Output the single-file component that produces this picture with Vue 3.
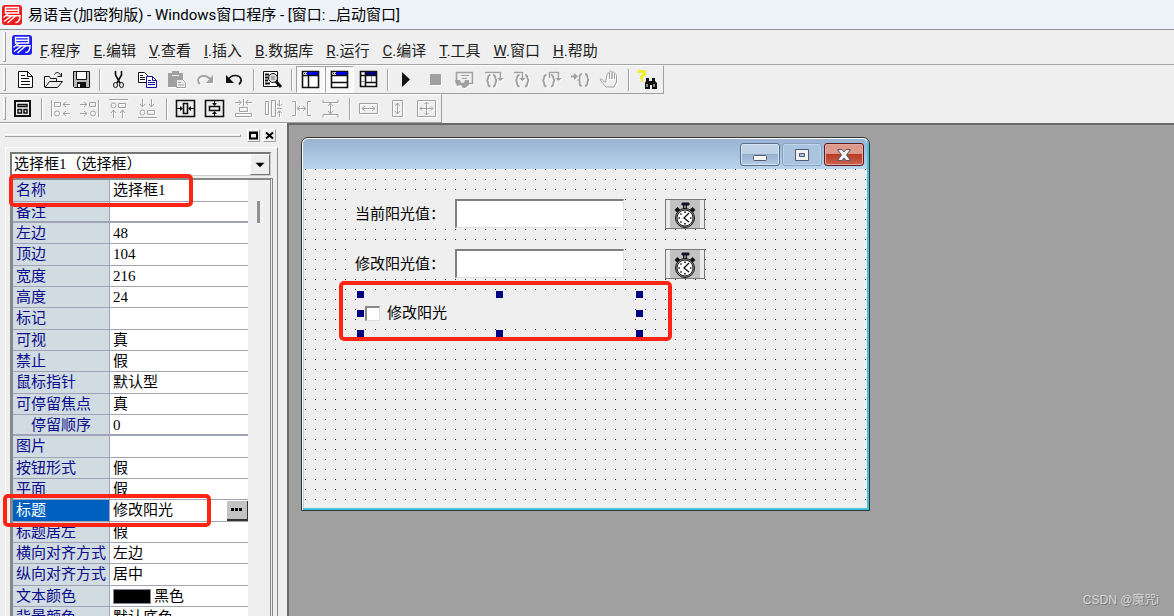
<script setup>
import { ref } from 'vue'

const menus = [
  ['F', '程序'], ['E', '编辑'], ['V', '查看'], ['I', '插入'], ['B', '数据库'],
  ['R', '运行'], ['C', '编译'], ['T', '工具'], ['W', '窗口'], ['H', '帮助'],
]

const logoPath = 'M3.500 2.500h13v5.500h-13zM3.500 5.300h13M7 8l-5.500 4.500M4.500 10.700h13.500c0 4.500-1 6.800-4.500 6.800M9.500 11l-7.500 5.500M13.500 11l-8 7'

const icons = {
  create: '<path d="M2.5 1.5h9l5 5v11h-14z" fill="#fff"/><path d="M11.5 1.5v5h5M5 5.5h4M5 8.5h8M5 11.5h9M5 14.5h9"/>',
  open: '<path d="M.5 17V6.5h5l1 2h6v3M1 17.5l4.500-6h13l-5 6z"/><path d="M10.500 4.500c1.500-3 5-2.500 6 1M17.500 3v3.500h-4"/>',
  save: '<path d="M1.500 1.500h16v16h-15l-1-1z" fill="#bbb"/><path d="M4.500 1.500h10v8h-10z" fill="#fff"/><path class="f" d="M5 12h9v6H5z"/><path d="M7 14v3" stroke="#fff" stroke-width="2"/>',
  cut: '<path d="M6.500 1v4l4.500 8M12.500 1v4L8 13" stroke-width="1.600"/><ellipse cx="6.500" cy="15" rx="2" ry="2.600"/><ellipse cx="12.500" cy="15" rx="2" ry="2.600"/>',
  copy: '<path d="M.5 2.500h6l3 3v7h-9z" fill="#fff"/><path d="M2 5.500h3M2 7.500h5M2 9.500h5"/><g stroke="#1010a0"><path d="M8.500 6.500h6l4 4v7h-10z" fill="#fff"/><path d="M14.500 6.500v4h4M10 10.500h3M10 12.500h7M10 14.500h7"/></g>',
  paste: '<path class="f" d="M1 3h4V1h7v2h4v14H1z"/><path d="M5 5.500h7" stroke="#eee"/><path d="M9.500 9.500h6l3 3v5h-9z" fill="#eee"/><path d="M11 12.500h3M11 15h6"/>',
  redo: '<path d="M4 14c-4-4-1-8 4-8 3 0 5 1.500 7 4" stroke-width="1.800"/><path class="f" d="M17 5v8H10z"/>',
  undo: '<path d="M3 10c2-3.500 4-5 8-4.500 5 .5 7 5 3 9" stroke-width="1.600"/><path class="f" d="M1 5v8h8z"/>',
  preview: '<path d="M.5 1.500h14v15H.5z" fill="#fff"/><path d="M2 4.500h4M2 7.500h3M2 10.500h3M2 13.500h5" stroke-width="2"/><circle cx="10" cy="8" r="4.500" fill="#ddd"/><path d="M8 7h4M8 9h4" stroke="#777"/><path d="M13 11.500l5 5.500" stroke-width="3"/>',
  winSide: '<path d="M1.500 1.500h16v16h-16z" fill="#fff" stroke-width="1.600"/><path d="M6 2h11v3H6z" fill="#0000e8" stroke="none"/><path d="M1.500 5.500h16M7.500 6v11" stroke-width="1.500"/><path d="M3 3.500h1M5 3.500h1"/>',
  winBottom: '<path d="M1.500 1.500h16v16h-16z" fill="#fff" stroke-width="1.600"/><path d="M6 2h11v3H6z" fill="#0000e8" stroke="none"/><path d="M1.500 5.500h16M2 12.500h15" stroke-width="1.500"/><path d="M3 3.500h1M5 3.500h1"/>',
  winBoth: '<path d="M1.500 1.500h16v15h-16z" fill="#fff" stroke-width="1.600"/><path d="M6 2h11v3H6z" fill="#000080" stroke="none"/><path d="M1.500 5.500h16M6.500 2v14M7 12.500h10" stroke-width="1.600"/><path d="M2 11.500h4M12.500 6v6" stroke="#888"/>',
  run: '<path class="f" d="M5 2l8 7.500L5 17z"/>',
  stop: '<path class="f" d="M4 4h11v11H4z"/>',
  inspect: '<path d="M1.500 2.500h16v11h-16z" fill="#eee" stroke-width="1.600"/><path d="M6 5.500h8M7 8.500h5"/><path class="f" d="M0 10h5l1 3h3l1-3h4v5l-4 3H8l-2-3-4 1z"/>',
  stepInto: '<path d="M1 2.500h15.500v6" stroke-width="1.500"/><path class="f" d="M13 8h7l-3.500 3z"/><path d="M6.500 5c-4 0-1 5-4 5.500 3 .5 0 6 4 6M9 5c4 0 1 5 4 5.500-3 .5 0 6-4 6" stroke-width="1.800"/>',
  stepOver: '<path d="M1 2.500h8.500v6" stroke-width="1.500"/><path class="f" d="M6 8h7l-3.500 3z"/><path d="M6.500 5c-4 0-1 5-4 5.500 3 .5 0 6 4 6M12 5c4 0 1 5 4 5.500-3 .5 0 6-4 6" stroke-width="1.800"/>',
  stepOut: '<path d="M7.500 8V2.500h9v6" stroke-width="1.500"/><path class="f" d="M13 8h7l-3.500 3z"/><path d="M4.500 5c-4 0-1 5-4 5.500 3 .5 0 6 4 6M9 5c4 0 1 5 4 5.500-3 .5 0 6-4 6" stroke-width="1.800"/>',
  runTo: '<path d="M0 6.500h5" stroke-width="2"/><path class="f" d="M3 3l4 3.500L3 10z"/><path d="M11 4c-4 0-1 5-3 6 2 .5-1 6 3 6M14 4c4 0 1 5 4 6-3 .5 0 6-4 6" stroke-width="1.800"/>',
  hand: '<path d="M5.500 12.500L2 9.500c-2-1.500-2 .5-1 1.500l5 6h8l2.500-5V5.500c0-2-2-2-2 0V9 3.500c0-2-2.500-2-2.500 0V9 2.500c0-2-2.500-2-2.500 0V9 4.500c0-2-2.500-2-2.500 0z"/>',
  find: '<path d="M1 3V1.500h5.500v3l-3 2V9M3 10.500h2" stroke="#f4ec00" stroke-width="2.400"/><path class="f" d="M8 8h3v3h3V8h3v3l2 2v6h-5v-4h-2v4H7v-6l1-2z"/><path d="M9 14v3M16 14v3" stroke="#fff"/>',
  layout: '<path d="M2 2h15v15H2z" stroke-width="2"/><path d="M5 5.500h9v2H5zM5 10.500h3.500V14H5zM11 10.500h3V14h-3z" stroke-width="1.500"/>',
  alignLeft: '<path d="M.5 1v17M3.500 3.500h6v4h-6zM12 5.500h7M15 3l-3 2.500L15 8M12 14.500h7M15 12l-3 2.500 3 2.500"/><circle cx="6" cy="14.500" r="2.500"/>',
  alignRight: '<path d="M18.500 1v17M9.500 3.500h6v4h-6zM0 5.500h7M4 3l3 2.500L4 8M0 14.500h7M4 12l3 2.500L4 17"/><circle cx="13" cy="14.500" r="2.500"/>',
  alignTop: '<path d="M0 .5h19M9.500 4.500h7v4h-7zM4.500 11v8M2 14l2.500-3L7 14M13.500 11v8M11 14l2.500-3 2.500 3"/><circle cx="4.500" cy="6.500" r="2.500"/>',
  alignBottom: '<path d="M0 18.500h19M9.500 11.500h7v4h-7zM4.500 0v8M2 5l2.500 3L7 5M13.500 0v8M11 5l2.500 3L16 5"/><circle cx="4.500" cy="13.500" r="2.500"/>',
  centerH: '<path d="M.5 1.500h18v16H.5zM7.500 4.500h4v10h-4z" stroke-width="1.600"/><path d="M1 9.500h5M18 9.500h-5"/><path class="f" d="M4 7l3 2.500L4 12zM15 7l-3 2.500 3 2.500z"/>',
  centerV: '<path d="M.5 1.500h18v16H.5zM4.500 7.500h10v4h-10z" stroke-width="1.600"/><path d="M9.500 1v5M9.500 18v-5"/><path class="f" d="M7 4h5L9.500 7zM7 15h5l-2.500-3z"/>',
  middleV: '<path d="M9.500 0v7M1 3.500h6M18 3.500h-6M5 1l2 2.500L5 6M14 1l-2 2.500L14 6M5.500 8.500h8v4h-8zM1.500 14.500h16v3h-16z"/>',
  middleH: '<path d="M2.500 2.500h3v13h-3zM8.500 1.500h4v16h-4zM14 9.500h5M16.500 1v6M14 5l2.500 2L19 5M16.500 18v-6M14 14l2.500-2 2.500 2"/>',
  spaceH: '<path d="M0 2.500h3.500v14H0M19 2.500h-3.500v14H19M5 9.500h9M8 7L5 9.500 8 12M11 7l3 2.500-3 2.500"/>',
  spaceV: '<path d="M2 .5v3h15v-3M2 18.500v-3h15v3M9.500 4v11M7 7l2.500-3L12 7M7 12l2.500 3 2.500-3"/>',
  sameW: '<path d="M.5 4.500h18v10H.5zM3 9.500h13M6 7L3 9.500 6 12M13 7l3 2.500-3 2.500"/>',
  sameH: '<path d="M4.500 1.500h10v16h-10zM9.500 4v11M7 7l2.500-3L12 7M7 12l2.500 3 2.500-3"/>',
  sameBoth: '<path d="M.5 1.500h18v16H.5zM9.500 3v13M3 9.500h13M7.500 5l2-2 2 2M7.500 14l2 2 2-2M5 7.500l-2 2 2 2M14 7.500l2 2-2 2"/>',
}

const mainBar = [
  [['create', '新建'], ['open', '打开'], ['save', '保存']],
  [['cut', '剪切'], ['copy', '复制'], ['paste', '粘贴', 1], ['redo', '重做', 1], ['undo', '撤销']],
  [['preview', '查找']],
  [['winSide', '工作夹', 0, 1], ['winBottom', '状态夹', 0, 1], ['winBoth', '全部']],
  [['run', '运行'], ['stop', '停止', 1], ['inspect', '查看', 1], ['stepInto', '跟踪进入', 1], ['stepOver', '单步', 1], ['stepOut', '跟踪返回', 1], ['runTo', '运行到光标', 1], ['hand', '断点', 1]],
  [['find', '帮助']],
]
const alignBar = [
  [['layout', '窗口布局']],
  [['alignLeft', '左对齐', 1], ['alignRight', '右对齐', 1], ['alignTop', '顶对齐', 1], ['alignBottom', '底对齐', 1]],
  [['centerH', '水平居中'], ['centerV', '垂直居中'], ['middleV', '中心对齐', 1], ['middleH', '中线对齐', 1], ['spaceH', '水平等距', 1], ['spaceV', '垂直等距', 1]],
  [['sameW', '同宽', 1], ['sameH', '同高', 1], ['sameBoth', '同大小', 1]],
]
const bars = [{ name: 'standard', groups: mainBar }, { name: 'align', groups: alignBar }]

const properties = [
  { name: '名称', value: '选择框1' },
  { name: '备注', value: '', end: true },
  { name: '左边', value: '48' },
  { name: '顶边', value: '104' },
  { name: '宽度', value: '216' },
  { name: '高度', value: '24' },
  { name: '标记', value: '' },
  { name: '可视', value: '真' },
  { name: '禁止', value: '假' },
  { name: '鼠标指针', value: '默认型' },
  { name: '可停留焦点', value: '真' },
  { name: '停留顺序', value: '0', sub: true, end: true },
  { name: '图片', value: '' },
  { name: '按钮形式', value: '假' },
  { name: '平面', value: '假' },
  { name: '标题', value: '修改阳光', selected: true },
  { name: '标题居左', value: '假' },
  { name: '横向对齐方式', value: '左边' },
  { name: '纵向对齐方式', value: '居中' },
  { name: '文本颜色', value: '黑色', swatch: true },
  { name: '背景颜色', value: '默认底色' },
]

const current = ref('')
const target = ref('')
const checked = ref(false)
const handles = ['nw', 'n', 'ne', 'w', 'e', 'sw', 's', 'se']
</script>

<template>
  <div class="app">
    <header class="titlebar">
      <svg class="logo" viewBox="0 0 20 20" aria-hidden="true">
        <rect width="20" height="20" rx="3" fill="#f01c1c" />
        <path :d="logoPath" />
      </svg>
      <span>易语言(加密狗版) - Windows窗口程序 - [窗口: _启动窗口]</span>
    </header>

    <nav class="menubar">
      <i class="grip"></i>
      <svg class="logo" viewBox="0 0 20 20" aria-hidden="true">
        <rect width="20" height="20" rx="3" fill="#1c1cf0" />
        <path :d="logoPath" />
      </svg>
      <button v-for="m in menus" :key="m[0]" type="button"><u>{{ m[0] }}</u>.{{ m[1] }}</button>
    </nav>

    <div v-for="bar in bars" :key="bar.name" class="toolrow">
      <div class="toolbar" :class="bar.name">
        <i class="grip"></i>
        <div v-for="(group, g) in bar.groups" :key="g" class="group">
          <button
            v-for="b in group"
            :key="b[0]"
            type="button"
            :aria-label="b[1]"
            :disabled="!!b[2]"
            :class="{ pressed: b[3] }"
          >
            <svg viewBox="0 0 19 19" v-html="icons[b[0]]"></svg>
          </button>
        </div>
      </div>
    </div>

    <main class="main">
      <aside class="panel">
        <div class="caption">
          <i></i>
          <button type="button" aria-label="最大化"><svg viewBox="0 0 9 9"><path d="M1 1.500h7v6H1zM1 2h7" /></svg></button>
          <button type="button" aria-label="关闭"><svg viewBox="0 0 9 9"><path d="M1 1.500l7 6M8 1.500l-7 6" /></svg></button>
        </div>
        <div class="sheet">
          <div class="combo">
            <select aria-label="组件"><option>选择框1（选择框）</option></select>
            <svg viewBox="0 0 20 20" aria-hidden="true"><path d="M5 8h10l-5 5z" /></svg>
          </div>
          <div class="grid">
            <table>
              <tbody>
                <tr v-for="p in properties" :key="p.name" :class="{ end: p.end, selected: p.selected }">
                  <th scope="row" :class="{ sub: p.sub }">{{ p.name }}</th>
                  <td>
                    <div class="cell">
                      <i v-if="p.swatch" class="swatch"></i>
                      <span>{{ p.value }}</span>
                      <button v-if="p.selected" type="button" aria-label="编辑标题">
                        <svg viewBox="0 0 12 3"><path d="M0 0h3v3H0zM4 0h3v3H4zM8 0h3v3H8z" /></svg>
                      </button>
                    </div>
                  </td>
                </tr>
              </tbody>
            </table>
            <div class="scroll"><i></i></div>
          </div>
        </div>
        <i class="mark mark-name"></i>
        <i class="mark mark-title"></i>
      </aside>

      <section class="workspace">
        <div class="form">
          <div class="form-title">
            <button type="button" aria-label="最小化">
              <svg viewBox="0 0 18 14"><rect x="2.500" y="7.500" width="13" height="5" rx="1" /></svg>
            </button>
            <button type="button" class="dim" aria-label="最大化">
              <svg viewBox="0 0 18 14"><path fill-rule="evenodd" d="M2.500 1.500h13v11h-13zM6.500 5.500h5v3h-5z" /></svg>
            </button>
            <button type="button" class="close" aria-label="关闭">
              <svg viewBox="0 0 18 14"><path d="M2.500 1.500h4.500l2 2.500 2-2.500h4.500L11.500 7l4 5.500H11L9 10l-2 2.500H2.500l4-5.500z" /></svg>
            </button>
          </div>
          <div class="canvas">
            <label class="lbl first" for="sun-now">当前阳光值：</label>
            <input id="sun-now" v-model="current" class="edit first" type="text" />
            <label class="lbl second" for="sun-new">修改阳光值：</label>
            <input id="sun-new" v-model="target" class="edit second" type="text" />
            <div v-for="t in ['first', 'second']" :key="t" class="timer" :class="t">
              <svg viewBox="0 0 30 28" aria-hidden="true">
                <path d="M12 3h7v2h-7z" fill="#15156e" stroke="#111" />
                <path d="M13.500 5h3v4h-3z" fill="#889" stroke="#111" />
                <path d="M6 8.500l3 3M24 8.500l-3 3" stroke="#111" stroke-width="4" />
                <circle cx="15" cy="18" r="9.500" fill="#999" stroke="#111" />
                <circle cx="15" cy="18" r="8" fill="#fff" stroke="#222" />
                <path d="M15 11.500v1.500M15 23v1.500M8.500 18H10M20 18h1.500M10.500 13.500l1 1M10.500 22.500l1-1" stroke="#111" stroke-width="1.600" />
                <path d="M19 13l-5 5 5 4" fill="none" stroke="#111" stroke-width="1.300" />
              </svg>
            </div>
            <label class="check"><input v-model="checked" type="checkbox" /><span>修改阳光</span></label>
            <div class="selection"><i v-for="h in handles" :key="h" :class="h"></i></div>
            <i class="mark mark-check"></i>
          </div>
        </div>
        <div class="watermark">CSDN @魔咒i</div>
      </section>
    </main>
  </div>
</template>

<style>
body {
  overflow: hidden;
}
</style>

<style scoped>
*,
*::before {
  box-sizing: border-box;
}
button,
input,
select {
  margin: 0;
  padding: 0;
  border: 0;
  border-radius: 0;
  background: none;
  color: inherit;
  font: inherit;
}
.app {
  height: 100vh;
  display: flex;
  flex-direction: column;
  background: #efefef;
  color: #000;
  font: 15px/20px "Liberation Serif", "Noto Sans CJK SC", sans-serif;
}
.titlebar {
  flex: none;
  height: 30px;
  display: flex;
  align-items: center;
  gap: 6px;
  padding-left: 2px;
  background: #edf3f9;
  border-bottom: 1px solid #8d9092;
  font-family: Roboto, "Noto Sans CJK SC", sans-serif;
  white-space: pre;
}
.logo {
  flex: none;
  width: 20px;
  height: 20px;
}
.logo path {
  fill: none;
  stroke: #fff;
  stroke-width: 1.4;
}
.menubar {
  flex: none;
  height: 35px;
  display: flex;
  align-items: center;
  border-bottom: 1px solid #a5a5a5;
  color: #222;
  font-family: Roboto, "Noto Sans CJK SC", sans-serif;
}
.menubar .logo {
  margin: 0 8px 4px 4px;
}
.menubar button {
  margin-right: 13px;
  padding-top: 7px;
}
.grip {
  flex: none;
  align-self: stretch;
  width: 3px;
  margin: 2px 2px 2px 3px;
  border-left: 1px solid #fff;
  border-right: 1px solid #a0a0a0;
  border-bottom: 1px solid #a0a0a0;
}
.toolrow {
  flex: none;
  display: flex;
}
.toolbar {
  height: 29px;
  display: flex;
  align-items: center;
  border-top: 1px solid #fff;
  border-bottom: 1px solid #a0a0a0;
  border-right: 1px solid #a0a0a0;
}
.toolbar.standard {
  padding-right: 1px;
}
.toolbar.standard .grip {
  margin-right: 5px;
}
.group {
  display: flex;
  align-items: center;
}
.group + .group::before {
  content: "";
  width: 2px;
  height: 22px;
  margin: 0 3px 0 4px;
  border-left: 1px solid #a0a0a0;
  border-right: 1px solid #fff;
}
.group button {
  width: 29px;
  height: 27px;
  display: grid;
  place-items: center;
  color: #111;
}
.toolbar.standard .grip + .group button {
  width: 28px;
}
.group button:disabled {
  color: #a0a0a0;
}
.group button:disabled svg {
  filter: drop-shadow(1px 1px 0 #fff);
}
.group button.pressed {
  background: #f8f8f8;
  border: 1px solid #fff;
  border-top-color: #a0a0a0;
  border-left-color: #a0a0a0;
}
.group svg {
  width: 19px;
  height: 19px;
  overflow: visible;
  fill: none;
  stroke: currentColor;
}
.group svg :deep(.f) {
  fill: currentColor;
  stroke: none;
}
.main {
  flex: 1;
  min-height: 0;
  display: flex;
}
.panel {
  position: relative;
  flex: none;
  width: 287px;
  padding: 4px 9px 0 5px;
  border-top: 1px solid #fff;
  display: flex;
  flex-direction: column;
  overflow: hidden;
}
.caption {
  flex: none;
  height: 14px;
  display: flex;
  align-items: center;
  gap: 3px;
  padding-right: 2px;
}
.caption i {
  flex: 1;
  height: 3px;
  margin-right: 3px;
  border-top: 1px solid #fff;
  border-bottom: 1px solid #a0a0a0;
  border-right: 1px solid #a0a0a0;
}
.caption button {
  width: 13px;
  height: 13px;
  display: grid;
  place-items: center;
  border: 1px solid #fff;
  border-right-color: #a0a0a0;
  border-bottom-color: #a0a0a0;
}
.caption svg {
  width: 9px;
  height: 9px;
  fill: none;
  stroke: #000;
  stroke-width: 2;
}
.sheet {
  flex: 1;
  min-height: 0;
  margin-top: 5px;
  padding: 4px 4px 0;
  border: 1px solid #fff;
  border-right: 1px solid #888;
  border-bottom: 0;
  display: flex;
  flex-direction: column;
}
.combo {
  position: relative;
  flex: none;
  height: 24px;
  margin-right: 2px;
  border: 2px solid #777;
  border-right: 1px solid #ccc;
  border-bottom: 1px solid #ccc;
  background: #fff;
}
.combo select {
  appearance: none;
  width: 100%;
  height: 20px;
  padding-left: 2px;
}
.combo svg {
  position: absolute;
  right: 0;
  top: 0;
  width: 20px;
  height: 21px;
  background: #efefef;
  border: 1px solid #fff;
  border-right-color: #777;
  border-bottom-color: #777;
  pointer-events: none;
}
.grid {
  flex: 1;
  min-height: 0;
  margin-top: 2px;
  display: flex;
  align-items: flex-start;
  overflow: hidden;
  border: 3px solid #888;
  border-top-width: 2px;
  border-right: 3px double #888;
  border-bottom: 0;
}
table {
  flex: 1;
  border-collapse: separate;
  border-spacing: 0;
  table-layout: fixed;
  background: #fff;
}
tr {
  height: 21px;
}
tr:nth-child(3n + 1) {
  height: 22px;
}
th,
td {
  padding: 0;
  border-bottom: 1px solid #a0a3b6;
  text-align: left;
  line-height: 19px;
  white-space: nowrap;
}
th {
  width: 97px;
  padding-left: 3px;
  background: #d0dce2;
  border-right: 1px solid #a0a3b6;
  color: #0a0a8a;
  font-weight: 400;
}
th.sub {
  padding-left: 18px;
}
.end th,
.end td {
  border-bottom-width: 2px;
  line-height: 18px;
}
.selected th {
  background: #0060c0;
  color: #fff;
}
.cell {
  display: flex;
  align-items: center;
  padding-left: 3px;
}
.cell button {
  width: 21px;
  height: 20px;
  margin-left: auto;
  display: grid;
  place-items: center;
  background: #c3c3c3;
  border-right: 1px solid #333;
  border-bottom: 2px solid #333;
}
.cell button svg {
  width: 12px;
  height: 3px;
}
.swatch {
  width: 38px;
  height: 15px;
  margin-right: 3px;
  background: #000;
  border: 1px solid #889;
}
.scroll {
  width: 22px;
  padding: 21px 0 0 9px;
}
.scroll i {
  display: block;
  width: 3px;
  height: 22px;
  background: #919191;
}
.mark {
  position: absolute;
  border: 4px solid #ff2413;
  border-radius: 5px;
  pointer-events: none;
}
.mark-name {
  left: 9px;
  top: 50px;
  width: 184px;
  height: 33px;
}
.mark-title {
  left: 3px;
  top: 370px;
  width: 208px;
  height: 33px;
}
.workspace {
  position: relative;
  flex: 1;
  overflow: hidden;
  background: #a0a0a0;
  border-top: 2px solid #696969;
  border-left: 2px solid #696969;
}
.form {
  position: absolute;
  left: 12px;
  top: 12px;
  width: 569px;
  height: 374px;
  display: flex;
  flex-direction: column;
  border: 1px solid #333;
  border-radius: 7px 7px 0 0;
  background: #efefef;
  box-shadow: inset 1px 1px 0 #fff, inset -2px -2px 0 #3fc4dc;
  padding: 1px 2px 2px 1px;
}
.form-title {
  flex: none;
  height: 30px;
  display: flex;
  justify-content: flex-end;
  gap: 2px;
  padding: 4px 3px 0 0;
  border-radius: 5px 5px 0 0;
  background: linear-gradient(#98b4d2, #bad3ed);
}
.form-title button {
  width: 40px;
  height: 23px;
  display: grid;
  place-items: center;
  border: 1px solid #5c6f8a;
  border-radius: 3px;
  background: linear-gradient(#bfd2e7 45%, #94b0d0 50%, #b4cce6);
  box-shadow: inset 0 0 0 1px #d5e3f2;
}
.form-title .dim {
  border-color: #8aa1bd;
  background: #aac4e0;
  box-shadow: inset 0 0 0 1px #bfd4ea;
}
.form-title .close {
  border-color: #5a1c20;
  background: linear-gradient(#dd9a8c 45%, #b83a24 50%, #cb6450);
  box-shadow: inset 0 0 0 1px #e4a99e;
}
.form-title svg {
  width: 18px;
  height: 14px;
  fill: #f4f4f4;
  stroke: #555a6c;
}
.canvas {
  position: relative;
  flex: 1;
  border-left: 1px solid #b9d1ea;
  background-image: conic-gradient(at 1px 1px, transparent 75%, #222 0);
  background-size: 10px 10px;
  background-position: 1px 0;
}
.lbl {
  position: absolute;
  left: 46px;
  width: 104px;
  height: 30px;
  padding-left: 5px;
  background: #efefef;
  line-height: 30px;
}
.edit {
  position: absolute;
  left: 151px;
  width: 169px;
  height: 29px;
  padding: 0 4px;
  background: #fff;
  border: 2px solid #808080;
  border-right: 1px solid #e0e0e0;
  border-bottom: 1px solid #e0e0e0;
}
.timer {
  position: absolute;
  left: 361px;
  width: 40px;
  height: 30px;
  display: grid;
  place-items: center;
  background: #c2c2c2;
  border: 1px solid #777;
  box-shadow: inset 4px 0 0 #ececec, inset -4px 0 0 #ececec;
}
.timer svg {
  width: 30px;
  height: 28px;
}
.first {
  top: 30px;
}
.second {
  top: 80px;
}
.check {
  position: absolute;
  left: 56px;
  top: 126px;
  width: 274px;
  height: 32px;
  display: flex;
  align-items: center;
  gap: 7px;
  padding: 4px 0 0 5px;
  background: #efefef;
}
.check input {
  appearance: none;
  width: 15px;
  height: 15px;
  background: #fff;
  border: 2px solid #888;
  border-right: 1px solid #ddd;
  border-bottom: 1px solid #ddd;
}
.check input:checked {
  background: #000080;
}
.selection {
  position: absolute;
  left: 53px;
  top: 122px;
  width: 286px;
  height: 46px;
  display: grid;
  grid-template: "nw n ne" 1fr "w . e" 1fr "sw s se" 1fr / 1fr 1fr 1fr;
  pointer-events: none;
}
.selection i {
  width: 7px;
  height: 7px;
  background: #000080;
  place-self: center;
}
.nw { grid-area: nw; }
.n { grid-area: n; }
.ne { grid-area: ne; }
.w { grid-area: w; }
.e { grid-area: e; }
.sw { grid-area: sw; }
.s { grid-area: s; }
.se { grid-area: se; }
.selection .nw,
.selection .n,
.selection .ne {
  align-self: start;
}
.selection .sw,
.selection .s,
.selection .se {
  align-self: end;
}
.selection .nw,
.selection .w,
.selection .sw {
  justify-self: start;
}
.selection .ne,
.selection .e,
.selection .se {
  justify-self: end;
}
.mark-check {
  left: 35px;
  top: 112px;
  width: 333px;
  height: 60px;
}
.watermark {
  position: absolute;
  right: 15px;
  bottom: 6px;
  color: #d8d8d8;
  font: 12px/20px "Liberation Sans", "Noto Sans CJK SC", sans-serif;
  text-shadow: 1px 1px 0 #777;
}
</style>
